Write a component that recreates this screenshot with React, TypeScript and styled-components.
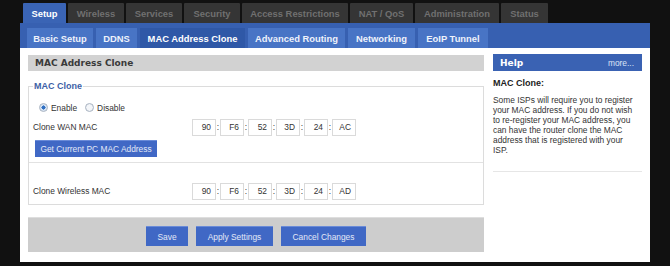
import React from "react";
import styled, { createGlobalStyle } from "styled-components";

const GlobalStyle = createGlobalStyle`
  html, body {
    margin: 0;
    padding: 0;
    background: #111111;
  }
  body {
    font-family: "Liberation Sans", Arial, sans-serif;
    color: #333333;
  }
`;

const Page = styled.div`
  width: 630px;
  padding: 3px 0 0 20px;
`;

const TopTabs = styled.div`
  display: flex;
  gap: 2px;
  padding-left: 3px;
  height: 20px;
`;

const TopTab = styled.div<{ $w: number; $active?: boolean }>`
  width: ${(p) => p.$w}px;
  height: 20px;
  display: flex;
  align-items: center;
  justify-content: center;
  background: ${(p) => (p.$active ? "#3a64b5" : "#353535")};
  color: ${(p) => (p.$active ? "#ffffff" : "#707070")};
  font: bold 9.4px "Liberation Sans", Arial, sans-serif;
  border-radius: 1px 1px 0 0;
`;

const SubBar = styled.div`
  height: 25px;
  box-sizing: border-box;
  background: #3760b1;
  display: flex;
  align-items: flex-end;
  gap: 3px;
  padding-left: 7px;
`;

const SubTab = styled.div<{ $w: number; $active?: boolean }>`
  width: ${(p) => p.$w}px;
  height: 20px;
  display: flex;
  align-items: center;
  justify-content: center;
  background: ${(p) => (p.$active ? "#2f58a7" : "#4874c5")};
  color: ${(p) => (p.$active ? "#ffffff" : "#eef2fb")};
  font: bold 9.4px "Liberation Sans", Arial, sans-serif;
`;

const Body = styled.div`
  height: 214px;
  box-sizing: border-box;
  background: #ffffff;
  display: flex;
  gap: 9px;
  padding: 7px 8px 0 8px;
`;

const Main = styled.div`
  width: 456px;
  display: flex;
  flex-direction: column;
`;

const SectionHeader = styled.div`
  height: 16px;
  background: #d2d2d2;
  padding-left: 7px;
  color: #3a3a3a;
  font: bold 9px "DejaVu Sans", Verdana, sans-serif;
  line-height: 16px;
`;

const Fieldset = styled.fieldset`
  margin: 9px 0 0;
  padding: 0 4px 4px;
  border: 1px solid #dcdcdc;
  min-width: 0;
  display: flex;
  flex-direction: column;
`;

const Legend = styled.legend`
  padding: 0 1px;
  color: #3d5fa6;
  font: bold 9px "Liberation Sans", Arial, sans-serif;
  line-height: 12px;
`;

const RadioRow = styled.div`
  margin-top: 5px;
  height: 21px;
  display: flex;
  align-items: center;
  gap: 8px;
  padding-left: 6px;
`;

const Option = styled.label`
  display: flex;
  align-items: center;
  gap: 3px;
  font-size: 8.4px;
`;

const Radio = styled.span<{ $checked?: boolean }>`
  width: 7px;
  height: 7px;
  border-radius: 50%;
  border: 1px solid #a9b4c2;
  background: ${(p) =>
    p.$checked
      ? "radial-gradient(circle, #2f6fc2 0 38%, #d7e3f2 45%)"
      : "radial-gradient(circle, #f4f6f9 0 50%, #dde2e8 100%)"};
`;

const MacRow = styled.div<{ $gap?: number }>`
  display: flex;
  align-items: center;
  height: 18px;
  margin-top: ${(p) => p.$gap ?? 0}px;
`;

const Label = styled.span`
  width: 159px;
  font-size: 8.4px;
`;

const MacGroup = styled.div`
  display: flex;
  align-items: center;
`;

const Octet = styled.span`
  width: 24px;
  height: 17px;
  box-sizing: border-box;
  border: 1px solid #dadada;
  font-size: 8.4px;
  line-height: 15px;
  text-align: right;
  padding-right: 4px;
`;

const Colon = styled.span`
  width: 4px;
  font-size: 8.4px;
  text-align: center;
`;

const BlueButton = styled.button<{ $w: number }>`
  width: ${(p) => p.$w}px;
  height: 20px;
  padding: 0;
  border: none;
  border-top: 1px solid #6a8bd8;
  background: #4068c5;
  color: #e3e9f7;
  font: 8.4px "Liberation Sans", Arial, sans-serif;
`;

const CurrentButton = styled(BlueButton)`
  height: 17px;
  margin: 4px 0 0 2px;
  align-self: flex-start;
`;

const Separator = styled.div`
  height: 1px;
  background: #e2e2e2;
  margin: 5px -4px 0;
`;

const ButtonBar = styled.div`
  margin-top: 12px;
  height: 35px;
  box-sizing: border-box;
  background: #cdcdcd;
  border-top: 1px solid #dedede;
  display: flex;
  justify-content: center;
  gap: 8px;
  padding-top: 8px;
`;

const Help = styled.div`
  width: 149px;
  display: flex;
  flex-direction: column;
`;

const HelpHeader = styled.div`
  height: 17px;
  margin-top: -1px;
  background: #3a62b3;
  display: flex;
  align-items: center;
  justify-content: space-between;
  padding: 0 8px 0 7px;
`;

const HelpTitle = styled.span`
  color: #ffffff;
  font: bold 9px "DejaVu Sans", Verdana, sans-serif;
`;

const More = styled.span`
  color: #dbe3f5;
  font-size: 8.4px;
`;

const HelpHeading = styled.div`
  margin-top: 7px;
  line-height: 12px;
  font: bold 9px "Liberation Sans", Arial, sans-serif;
  color: #222222;
`;

const HelpText = styled.p`
  margin: 7px 0 0;
  font-size: 8.4px;
  line-height: 10px;
  color: #333333;
`;

const HelpRule = styled.div`
  margin-top: 16px;
  height: 1px;
  background: #e6e6e6;
`;

const topTabs = [
  { label: "Setup", w: 43, active: true },
  { label: "Wireless", w: 56 },
  { label: "Services", w: 56 },
  { label: "Security", w: 56 },
  { label: "Access Restrictions", w: 106 },
  { label: "NAT / QoS", w: 63 },
  { label: "Administration", w: 84 },
  { label: "Status", w: 47 },
];

const subTabs = [
  { label: "Basic Setup", w: 66 },
  { label: "DDNS", w: 41 },
  { label: "MAC Address Clone", w: 105, active: true },
  { label: "Advanced Routing", w: 97 },
  { label: "Networking", w: 67 },
  { label: "EoIP Tunnel", w: 70 },
];

const MacInput = ({ octets }: { octets: string[] }) => (
  <MacGroup>
    {octets.map((o, i) => (
      <React.Fragment key={i}>
        <Octet>{o}</Octet>
        {i < octets.length - 1 && <Colon>:</Colon>}
      </React.Fragment>
    ))}
  </MacGroup>
);

const App = () => (
  <Page>
    <GlobalStyle />
    <TopTabs>
      {topTabs.map((t) => (
        <TopTab key={t.label} $w={t.w} $active={t.active}>
          {t.label}
        </TopTab>
      ))}
    </TopTabs>
    <SubBar>
      {subTabs.map((t) => (
        <SubTab key={t.label} $w={t.w} $active={t.active}>
          {t.label}
        </SubTab>
      ))}
    </SubBar>
    <Body>
      <Main>
        <SectionHeader>MAC Address Clone</SectionHeader>
        <Fieldset>
          <Legend>MAC Clone</Legend>
          <RadioRow>
            <Option>
              <Radio $checked />
              Enable
            </Option>
            <Option>
              <Radio />
              Disable
            </Option>
          </RadioRow>
          <MacRow>
            <Label>Clone WAN MAC</Label>
            <MacInput octets={["90", "F6", "52", "3D", "24", "AC"]} />
          </MacRow>
          <CurrentButton $w={122}>Get Current PC MAC Address</CurrentButton>
          <Separator />
          <MacRow $gap={19}>
            <Label>Clone Wireless MAC</Label>
            <MacInput octets={["90", "F6", "52", "3D", "24", "AD"]} />
          </MacRow>
        </Fieldset>
        <ButtonBar>
          <BlueButton $w={42}>Save</BlueButton>
          <BlueButton $w={77}>Apply Settings</BlueButton>
          <BlueButton $w={85}>Cancel Changes</BlueButton>
        </ButtonBar>
      </Main>
      <Help>
        <HelpHeader>
          <HelpTitle>Help</HelpTitle>
          <More>more...</More>
        </HelpHeader>
        <HelpHeading>MAC Clone:</HelpHeading>
        <HelpText>
          Some ISPs will require you to register
          <br />
          your MAC address. If you do not wish
          <br />
          to re-register your MAC address, you
          <br />
          can have the router clone the MAC
          <br />
          address that is registered with your
          <br />
          ISP.
        </HelpText>
        <HelpRule />
      </Help>
    </Body>
  </Page>
);

export default App;
